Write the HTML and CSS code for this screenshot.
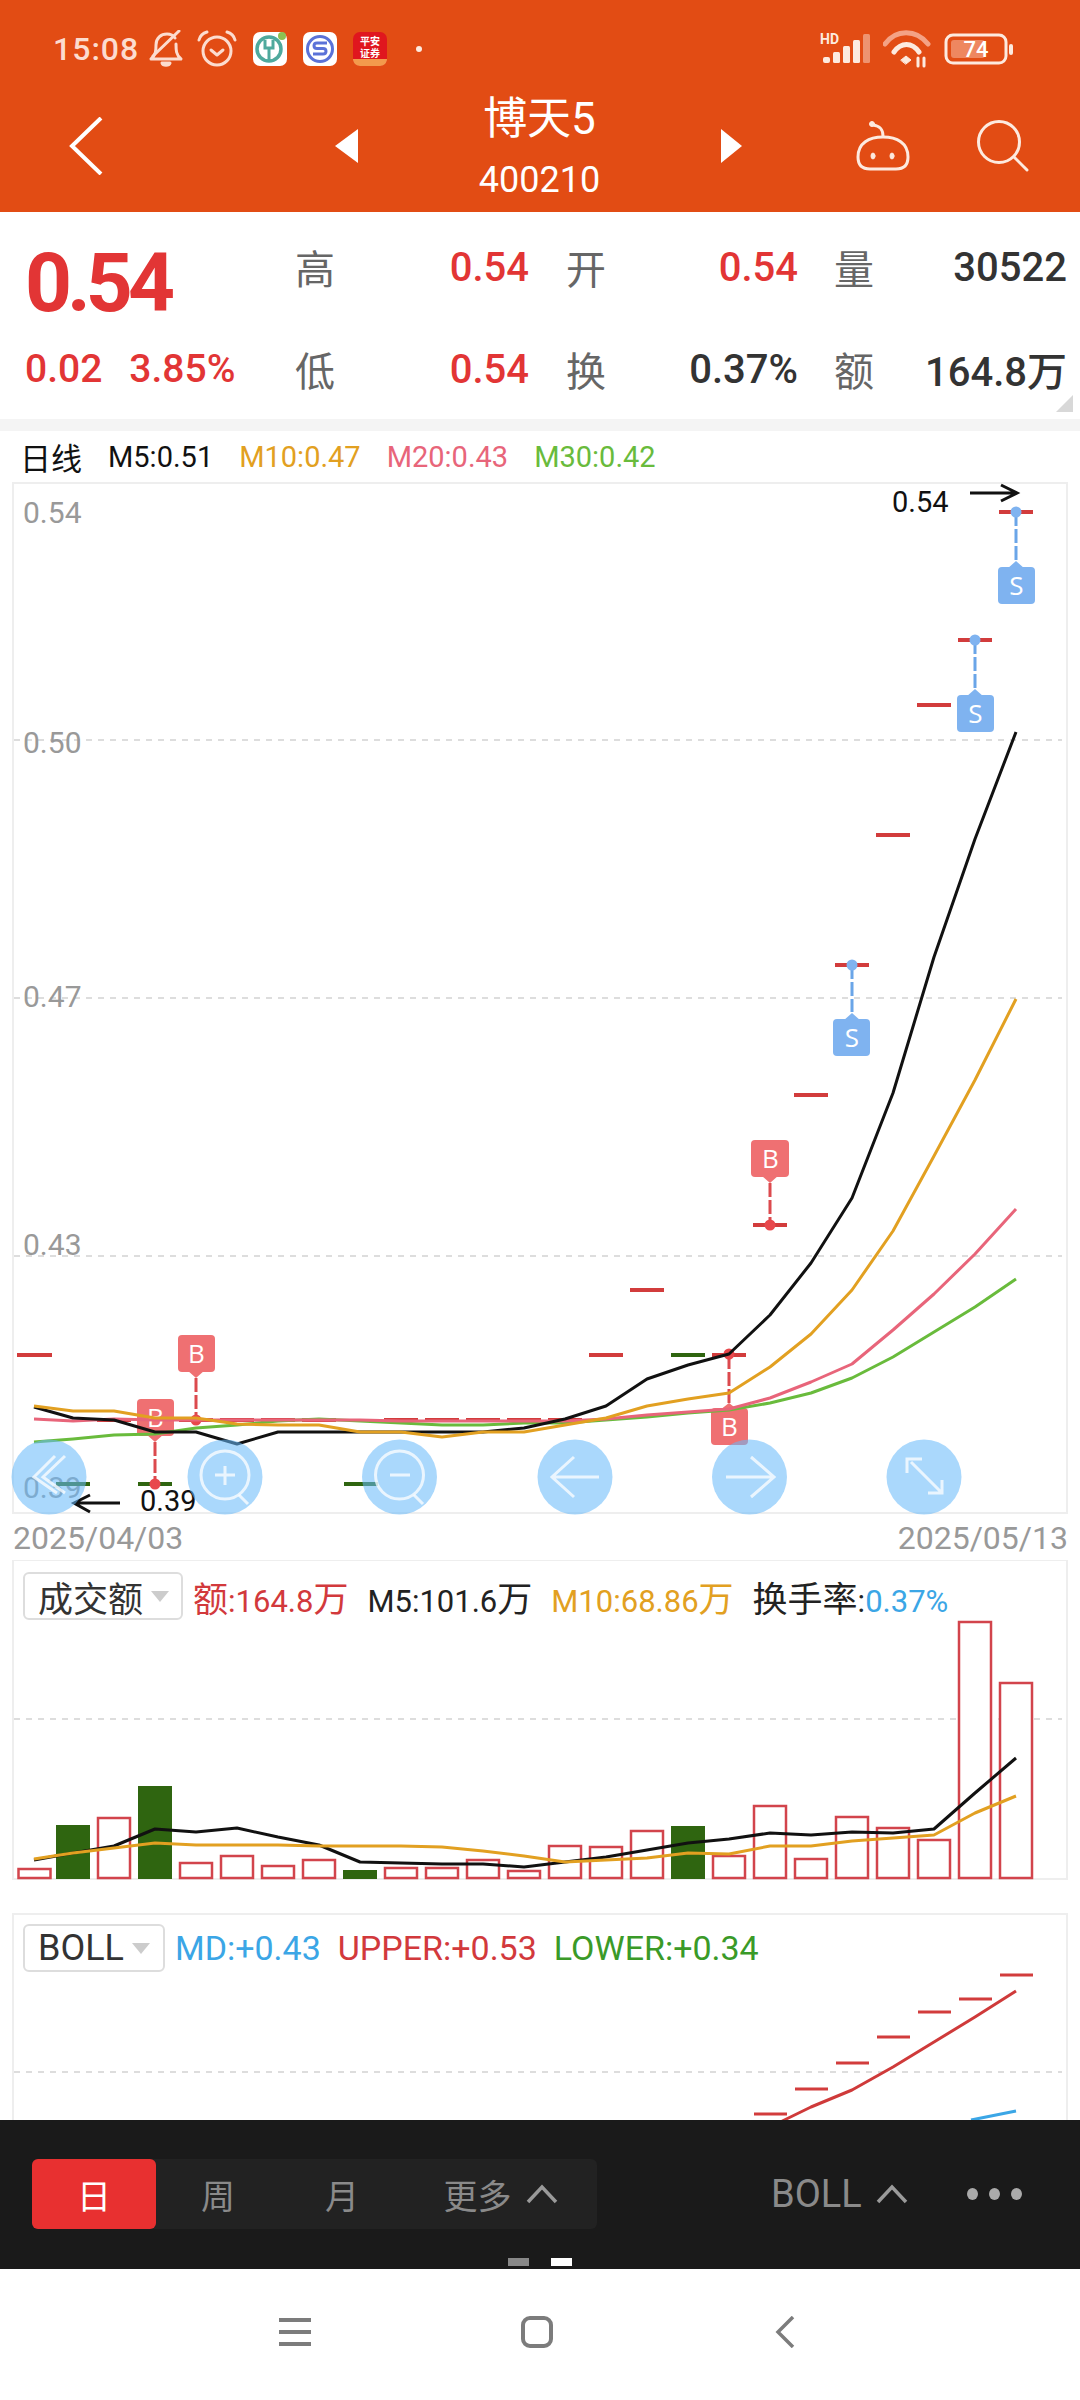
FILE: index.html
```html
<!DOCTYPE html>
<html lang="zh">
<head>
  <meta charset="UTF-8">
  <title>博天5 400210</title>
  <link rel="stylesheet" href="styles.css">
</head>
<body>
<div class="page">

  <!-- orange header: status bar + stock title -->
  <header class="header">
    <div class="status">
      <div class="status-left">
        <span class="time">15:08</span>
        <svg class="ico-bell" width="36" height="38" viewBox="0 0 36 38" fill="none" stroke="#fcdccf" stroke-width="3" stroke-linecap="round" stroke-linejoin="round">
          <path d="M3 29 C8 25 8 20 8 15 C8 8 13 4 19 4 C22 4 25 5 27 8 M28 14 C28 20 28 25 33 29 H3"/>
          <path d="M5 26 L31 1"/>
          <path d="M14 33 H22 C21 36 15 36 14 33Z" fill="#fcdccf"/>
        </svg>
        <svg class="ico-alarm" width="40" height="38" viewBox="0 0 40 38" fill="none" stroke="#fcdccf" stroke-width="3" stroke-linecap="round" stroke-linejoin="round">
          <circle cx="20" cy="21" r="14"/>
          <path d="M2 10 C3 6 6 3 10 2 M38 10 C37 6 34 3 30 2"/>
          <path d="M14 20 L20 25 L26 20"/>
        </svg>
        <svg class="ico-app" width="34" height="34" viewBox="0 0 34 34">
          <rect width="34" height="34" rx="7" fill="#fff"/>
          <circle cx="16" cy="17" r="12" fill="none" stroke="#4fa99d" stroke-width="3.5"/>
          <path d="M12 8 V16 H20 V8 M16 16 V29" fill="none" stroke="#4fa99d" stroke-width="3"/>
          <circle cx="29" cy="4" r="4" fill="#8cc152"/>
        </svg>
        <svg class="ico-app" width="34" height="34" viewBox="0 0 34 34" fill="none">
          <rect width="34" height="34" rx="7" fill="#fff"/>
          <circle cx="17" cy="17" r="12.5" stroke="#5b72d8" stroke-width="3"/>
          <path d="M24 11 H14 C10 11 10 16.500 14 16.500 H20 C24 16.500 24 22 20 22 H10" stroke="#5b72d8" stroke-width="3"/>
        </svg>
        <svg class="ico-app" width="34" height="34" viewBox="0 0 34 34">
          <rect width="34" height="34" rx="7" fill="#e0161e"/>
          <path d="M0 27 H34 C34 31 31 34 27 34 H7 C3 34 0 31 0 27Z" fill="#f39a4c"/>
          <text class="app-txt" x="17" y="13">平安</text>
          <text class="app-txt" x="17" y="25">证券</text>
        </svg>
        <span class="status-dot"></span>
      </div>
      <div class="status-right">
        <svg class="ico-signal" width="50" height="30" viewBox="0 0 50 30" fill="#fdeadf">
          <text class="hd-txt" x="0" y="10">HD</text>
          <rect x="3" y="23" width="7" height="6" rx="2"/>
          <rect x="13" y="18" width="7" height="11" rx="1.500"/>
          <rect x="23" y="12" width="7" height="17" rx="1.500"/>
          <rect x="33" y="6" width="7" height="23" rx="1.500"/>
          <rect x="43" y="0" width="7" height="29" rx="1.500" opacity=".45"/>
        </svg>
        <svg width="48" height="38" viewBox="0 0 48 38" fill="none" stroke-linecap="round">
          <path d="M2 14 C13 -1 33 -1 45 14" stroke="#f4a285" stroke-width="5"/>
          <path d="M11 22 C18 12 29 12 36 22" stroke="#fdeadf" stroke-width="5"/>
          <path d="M18 30 L23 26 L28 30 L23 34Z" fill="#fdeadf" stroke="#fdeadf" stroke-width="1"/>
          <path d="M35 28 V36 M41 28 V36" stroke="#fdeadf" stroke-width="3"/>
        </svg>
        <svg width="70" height="32" viewBox="0 0 70 32" fill="none">
          <rect x="2" y="2" width="60" height="28" rx="7" stroke="#fdeadf" stroke-width="3"/>
          <rect x="7" y="7" width="34" height="18" rx="3" fill="#ee8760"/>
          <rect x="65" y="11" width="4" height="11" rx="2" fill="#fdeadf"/>
          <text class="batt-txt" x="32" y="24">74</text>
        </svg>
      </div>
    </div>

    <div class="nav">
      <svg class="nav-back" width="34" height="58" viewBox="0 0 34 58" fill="none" stroke="#fff" stroke-width="4">
        <path d="M32 1 L3 29 L32 57"/>
      </svg>
      <svg class="nav-prev" width="23" height="34" viewBox="0 0 23 34" fill="#fff"><path d="M23 0 V34 L0 17Z"/></svg>
      <div class="nav-title">
        <div class="stock-name">博天5</div>
        <div class="stock-code">400210</div>
      </div>
      <svg class="nav-next" width="21" height="34" viewBox="0 0 21 34" fill="#fff"><path d="M0 0 V34 L21 17Z"/></svg>
      <svg class="nav-robot" width="56" height="50" viewBox="0 0 56 50" fill="none" stroke="#fdeadf" stroke-width="3" stroke-linecap="round">
        <path d="M3 36 C3 22 14 16 28 16 C42 16 53 22 53 36 C53 45 48 48 41 48 H15 C8 48 3 45 3 36Z"/>
        <path d="M28 15 C28 8 25 5 18 4"/>
        <circle cx="17" cy="3" r="2.500" fill="#fdeadf" stroke-width="1"/>
        <ellipse cx="18" cy="35" rx="2" ry="3" fill="#fdeadf" stroke-width="1"/>
        <ellipse cx="37" cy="35" rx="2" ry="3" fill="#fdeadf" stroke-width="1"/>
      </svg>
      <svg class="nav-search" width="52" height="52" viewBox="0 0 52 52" fill="none" stroke="#fdeadf" stroke-width="3" stroke-linecap="round">
        <circle cx="22" cy="22" r="20.500"/>
        <path d="M37 37 L50 50"/>
      </svg>
    </div>
  </header>

  <!-- quote table -->
  <section class="quote">
    <div class="price up">0.54</div>
    <div class="label">高</div><div class="val up">0.54</div>
    <div class="label">开</div><div class="val up">0.54</div>
    <div class="label">量</div><div class="val">30522</div>

    <div class="change up"><span>0.02</span><span>3.85%</span></div>
    <div class="label">低</div><div class="val up">0.54</div>
    <div class="label">换</div><div class="val">0.37%</div>
    <div class="label">额</div><div class="val">164.8万</div>
    <span class="corner"></span>
  </section>
  <div class="band"></div>

  <div class="ma-row">
    <span class="cjk">日线</span>
    <span>M5:0.51</span>
    <span class="c-yellow">M10:0.47</span>
    <span class="c-pink">M20:0.43</span>
    <span class="c-green">M30:0.42</span>
  </div>

  <!-- candle chart, viewBox uses screen coordinates -->
  <div class="kline">
    <svg class="chart" width="1052" height="1028" viewBox="14 484 1052 1028">
      <g class="grid">
        <line x1="14" y1="740" x2="1062" y2="740"/>
        <line x1="14" y1="998" x2="1062" y2="998"/>
        <line x1="14" y1="1256" x2="1062" y2="1256"/>
      </g>
      <g class="axis">
        <text x="23" y="523">0.54</text>
        <text x="23" y="753">0.50</text>
        <text x="23" y="1007">0.47</text>
        <text x="23" y="1255">0.43</text>
        <text x="23" y="1498">0.39</text>
      </g>

      <g class="dash-up">
        <line x1="17" y1="1355" x2="52" y2="1355"/>
        <line x1="97" y1="1420" x2="131" y2="1420"/>
        <line x1="179" y1="1420" x2="213" y2="1420"/>
        <line x1="220" y1="1420" x2="254" y2="1420"/>
        <line x1="261" y1="1420" x2="295" y2="1420"/>
        <line x1="302" y1="1420" x2="336" y2="1420"/>
        <line x1="384" y1="1420" x2="418" y2="1420"/>
        <line x1="425" y1="1420" x2="459" y2="1420"/>
        <line x1="466" y1="1420" x2="500" y2="1420"/>
        <line x1="507" y1="1420" x2="541" y2="1420"/>
        <line x1="548" y1="1420" x2="582" y2="1420"/>
        <line x1="589" y1="1355" x2="623" y2="1355"/>
        <line x1="630" y1="1290" x2="664" y2="1290"/>
        <line x1="712" y1="1355" x2="746" y2="1355"/>
        <line x1="753" y1="1225" x2="787" y2="1225"/>
        <line x1="794" y1="1095" x2="828" y2="1095"/>
        <line x1="835" y1="965" x2="869" y2="965"/>
        <line x1="876" y1="835" x2="910" y2="835"/>
        <line x1="917" y1="705" x2="951" y2="705"/>
        <line x1="958" y1="640" x2="992" y2="640"/>
        <line x1="999" y1="512" x2="1033" y2="512"/>
      </g>
      <g class="dash-down">
        <line x1="56" y1="1484" x2="90" y2="1484"/>
        <line x1="138" y1="1484" x2="172" y2="1484"/>
        <line x1="344" y1="1484" x2="378" y2="1484"/>
        <line x1="671" y1="1355" x2="705" y2="1355"/>
      </g>

      <g class="mark-buy">
        <line class="pin" x1="155" y1="1442" x2="155" y2="1484"/>
        <circle cx="155" cy="1484" r="5.500"/>
        <path d="M146 1434 H164 L155 1442Z"/>
        <rect x="137" y="1399" width="37" height="37" rx="4"/>
        <text x="155.500" y="1427">B</text>

        <line class="pin" x1="196" y1="1378" x2="196" y2="1420"/>
        <circle cx="196" cy="1420" r="5.500"/>
        <path d="M187 1370 H205 L196 1378Z"/>
        <rect x="178" y="1335" width="37" height="37" rx="4"/>
        <text x="196.500" y="1363">B</text>

        <line class="pin" x1="729" y1="1355" x2="729" y2="1403"/>
        <circle cx="729" cy="1354" r="5.500"/>
        <path d="M720 1410 H738 L729 1403Z"/>
        <rect x="711" y="1408" width="37" height="37" rx="4"/>
        <text x="729.500" y="1436">B</text>

        <line class="pin" x1="770" y1="1183" x2="770" y2="1225"/>
        <circle cx="770" cy="1225" r="5.500"/>
        <path d="M761 1175 H779 L770 1183Z"/>
        <rect x="751" y="1140" width="38" height="37" rx="4"/>
        <text x="770.500" y="1168">B</text>
      </g>
      <g class="mark-sell">
        <line class="pin" x1="852" y1="965" x2="852" y2="1012"/>
        <circle cx="852" cy="965" r="5.500"/>
        <path d="M843 1021 H861 L852 1013Z"/>
        <rect x="833" y="1019" width="37" height="37" rx="4"/>
        <text x="852" y="1047">S</text>

        <line class="pin" x1="975" y1="640" x2="975" y2="689"/>
        <circle cx="975" cy="640" r="5.500"/>
        <path d="M966 697 H984 L975 689Z"/>
        <rect x="957" y="695" width="37" height="37" rx="4"/>
        <text x="975.500" y="723">S</text>

        <line class="pin" x1="1016" y1="512" x2="1016" y2="561"/>
        <circle cx="1016" cy="512" r="5.500"/>
        <path d="M1007 569 H1025 L1016 561Z"/>
        <rect x="998" y="567" width="37" height="37" rx="4"/>
        <text x="1016.500" y="595">S</text>
      </g>

      <g class="lines">
        <polyline stroke="#69bb3c" points="34,1442 73,1439 114,1435 155,1434 196,1428 237,1425 278,1421 319,1419 360,1421 401,1423 442,1425 483,1425 524,1423 565,1423 606,1420 647,1417 688,1413 729,1410 770,1403 811,1393 852,1378 893,1357 934,1332 975,1307 1016,1279"/>
        <polyline stroke="#e8657a" points="34,1419 73,1421 114,1419 155,1420 196,1420 237,1420 278,1420 319,1420 360,1420 401,1421 442,1421 483,1421 524,1421 565,1421 606,1419 647,1415 688,1412 729,1409 770,1398 811,1382 852,1364 893,1330 934,1294 975,1254 1016,1209"/>
        <polyline stroke="#111" points="34,1407 73,1418 114,1420 155,1432 196,1432 237,1444 278,1432 319,1432 360,1432 401,1432 442,1432 483,1432 524,1428 565,1419 606,1406 647,1379 688,1365 729,1354 770,1315 811,1263 852,1198 893,1093 934,957 975,839 1016,732"/>
        <polyline stroke="#e2a021" points="34,1406 73,1411 114,1411 155,1418 196,1418 237,1424 278,1425 319,1425 360,1432 401,1432 442,1437 483,1432 524,1432 565,1425 606,1418 647,1406 688,1399 729,1393 770,1367 811,1334 852,1290 893,1231 934,1156 975,1080 1016,999"/>
      </g>

      <g class="extreme">
        <text x="892" y="512">0.54</text>
        <path d="M970 493 H1016 M1001 485 L1017 493 L1001 501"/>
        <text x="140" y="1511">0.39</text>
        <path d="M120 1503 H75 M90 1495 L74 1503 L90 1512"/>
      </g>

      <!-- round floating buttons -->
      <g class="fab">
        <circle cx="49" cy="1477" r="37.500"/>
        <circle cx="225" cy="1477" r="37.500"/>
        <circle cx="399.500" cy="1477" r="37.500"/>
        <circle cx="575" cy="1477" r="37.500"/>
        <circle cx="749.500" cy="1477" r="37.500"/>
        <circle cx="924" cy="1477" r="37.500"/>
      </g>
      <g class="fab-ico">
        <path d="M55 1456 L34 1477 L57 1493 M65 1456 L43 1477 L65 1493"/>
        <circle cx="225" cy="1475" r="24"/>
        <path d="M239 1495 L248 1504 M225 1466 V1485 M215 1475 H235"/>
        <circle cx="399.500" cy="1475" r="24"/>
        <path d="M414 1495 L423 1504 M390 1475 H410"/>
        <path d="M599 1477 H553 M574 1457 L552 1477 L574 1497"/>
        <path d="M726 1477 H773 M751 1457 L774 1477 L751 1497"/>
        <path d="M911 1462 L941 1492 M907 1473 V1459 H922 M928 1493 H942 V1480"/>
      </g>
    </svg>
  </div>

  <div class="dates">
    <span>2025/04/03</span>
    <span>2025/05/13</span>
  </div>

  <!-- turnover panel -->
  <section class="panel panel-vol">
    <div class="panel-head">
      <div class="picker"><span>成交额</span><i class="picker-arrow"></i></div>
      <div class="legend">
        <span class="c-red"><span class="cjk">额</span>:164.8<span class="cjk">万</span></span>
        <span>M5:101.6<span class="cjk">万</span></span>
        <span class="c-yellow">M10:68.86<span class="cjk">万</span></span>
        <span><span class="cjk">换手率</span>:<span class="c-blue">0.37%</span></span>
      </div>
    </div>
    <svg class="chart" width="1052" height="257" viewBox="14 1622 1052 257">
      <g class="grid"><line x1="14" y1="1719" x2="1062" y2="1719"/></g>
      <g class="bar-up">
        <rect x="18.500" y="1869" width="32" height="9"/>
        <rect x="98" y="1818" width="32" height="60"/>
        <rect x="180" y="1863" width="32" height="15"/>
        <rect x="221" y="1856" width="32" height="22"/>
        <rect x="262" y="1866" width="32" height="12"/>
        <rect x="303" y="1860" width="32" height="18"/>
        <rect x="385" y="1868" width="32" height="10"/>
        <rect x="426" y="1868" width="32" height="10"/>
        <rect x="467" y="1860" width="32" height="18"/>
        <rect x="508" y="1871" width="32" height="7"/>
        <rect x="549" y="1846" width="32" height="32"/>
        <rect x="590" y="1847" width="32" height="31"/>
        <rect x="631" y="1831" width="32" height="47"/>
        <rect x="713" y="1856" width="32" height="22"/>
        <rect x="754" y="1806" width="32" height="72"/>
        <rect x="795" y="1859" width="32" height="19"/>
        <rect x="836" y="1817" width="32" height="61"/>
        <rect x="877" y="1828" width="32" height="50"/>
        <rect x="918" y="1840" width="32" height="38"/>
        <rect x="959" y="1622" width="32" height="256"/>
        <rect x="1000" y="1683" width="32" height="195"/>
      </g>
      <g class="bar-down">
        <rect x="56" y="1825" width="34" height="54"/>
        <rect x="138" y="1786" width="34" height="93"/>
        <rect x="343" y="1870" width="34" height="9"/>
        <rect x="671" y="1826" width="34" height="53"/>
      </g>
      <g class="lines">
        <polyline stroke="#111" points="34,1860 73,1853 114,1846 155,1829 196,1832 237,1828 278,1837 319,1845 360,1862 401,1863 442,1864 483,1864 524,1867 565,1862 606,1857 647,1850 688,1843 729,1839 770,1833 811,1835 852,1832 893,1833 934,1829 975,1793 1016,1758"/>
        <polyline stroke="#e2a021" points="34,1859 73,1853 114,1848 155,1843 196,1845 237,1845 278,1845 319,1846 360,1846 401,1846 442,1847 483,1851 524,1856 565,1862 606,1860 647,1858 688,1853 729,1854 770,1846 811,1846 852,1841 893,1838 934,1835 975,1813 1016,1796"/>
      </g>
    </svg>
  </section>

  <!-- bollinger panel, cut off by the bar below -->
  <section class="panel panel-boll">
    <div class="panel-head">
      <div class="picker picker-boll"><span>BOLL</span><i class="picker-arrow"></i></div>
      <div class="legend">
        <span class="c-blue">MD:+0.43</span>
        <span class="c-red">UPPER:+0.53</span>
        <span class="c-dkgreen">LOWER:+0.34</span>
      </div>
    </div>
    <svg class="chart" width="1052" height="148" viewBox="14 1972 1052 148">
      <g class="grid"><line x1="14" y1="2072" x2="1062" y2="2072"/></g>
      <g class="dash-up thin">
        <line x1="754" y1="2114" x2="787" y2="2114"/>
        <line x1="795" y1="2089" x2="828" y2="2089"/>
        <line x1="836" y1="2063" x2="869" y2="2063"/>
        <line x1="877" y1="2037" x2="910" y2="2037"/>
        <line x1="918" y1="2012" x2="951" y2="2012"/>
        <line x1="959" y1="1999" x2="992" y2="1999"/>
        <line x1="1000" y1="1975" x2="1033" y2="1975"/>
      </g>
      <g class="lines">
        <polyline stroke="#cf3a3a" points="770,2127 811,2107 852,2090 893,2067 934,2042 975,2017 1016,1991"/>
        <polyline stroke="#3ba6e6" points="971,2120 1016,2111"/>
      </g>
    </svg>
  </section>

  <!-- period tabs -->
  <div class="tabbar">
    <div class="tabs">
      <span class="tab active">日</span>
      <span class="tab">周</span>
      <span class="tab">月</span>
      <span class="tab tab-more">更多<svg class="caret" width="32" height="20" viewBox="0 0 32 20"><path d="M2 18 L16 3 L30 18"/></svg></span>
    </div>
    <div class="tab-boll">BOLL<svg class="caret" width="32" height="20" viewBox="0 0 32 20"><path d="M2 18 L16 3 L30 18"/></svg></div>
    <div class="more-dots"><i></i><i></i><i></i></div>
    <div class="pager"><i></i><i class="on"></i></div>
  </div>

  <!-- android nav bar -->
  <footer class="sysnav">
    <svg width="32" height="28" viewBox="0 0 32 28" stroke="#7c7c7c" stroke-width="4"><path d="M0 2 H32 M0 14 H32 M0 26 H32"/></svg>
    <svg class="nav-home" width="32" height="32" viewBox="0 0 32 32" fill="none" stroke="#7c7c7c" stroke-width="4"><rect x="2" y="2" width="28" height="28" rx="7"/></svg>
    <svg class="nav-tri" width="20" height="32" viewBox="0 0 20 32" fill="none" stroke="#7c7c7c" stroke-width="3.500"><path d="M18 1 L3 16 L18 31"/></svg>
  </footer>
</div>
</body>
</html>
```

FILE: styles.css
```css
* {
  box-sizing: border-box;
}

body {
  margin: 0;
  background: #fff;
  font-family: Roboto, "Noto Sans CJK SC", sans-serif;
  color: #333;
}

.page {
  width: 1080px;
  height: 2400px;
  overflow: hidden;
}

/* header */
.header {
  height: 212px;
  background: #e24c14;
  color: #fff;
}

.status {
  height: 80px;
  padding: 18px 66px 0 53px;
  display: flex;
  justify-content: space-between;
}

.status-left,
.status-right {
  height: 62px;
  display: flex;
  align-items: center;
}

.time {
  font-size: 32px;
  font-weight: 500;
  letter-spacing: 1px;
  color: #fcdccf;
}

.ico-bell {
  margin-left: 9px;
}

.ico-alarm {
  margin-left: 13px;
}

.ico-app {
  margin-left: 16px;
}

.status-dot {
  width: 6px;
  height: 6px;
  margin-left: 29px;
  border-radius: 50%;
  background: #fdeadf;
}

.status-right {
  gap: 13px;
}

.ico-signal {
  overflow: visible;
}

.app-txt {
  font-size: 10px;
  font-weight: 700;
  fill: #fff;
  text-anchor: middle;
}

.hd-txt {
  font-size: 14px;
  font-weight: 700;
}

.batt-txt {
  font-size: 22px;
  font-weight: 500;
  fill: #fff;
  text-anchor: middle;
}

.nav {
  height: 132px;
  padding-left: 69px;
  display: flex;
  align-items: center;
}

.nav-prev {
  margin-left: 232px;
}

.nav-title {
  width: 363px;
  padding-top: 3px;
  text-align: center;
}

.stock-name {
  font-size: 44px;
  line-height: 60px;
}

.stock-code {
  margin-top: 5px;
  font-size: 36px;
  line-height: 52px;
}

.nav-robot {
  margin-left: 113px;
}

.nav-search {
  margin-left: 66px;
}

/* quote */
.quote {
  position: relative;
  height: 207px;
  padding: 4px 13px 0 25px;
  display: grid;
  grid-template-columns: 233px 77px 194px 77px 192px 76px 193px;
  grid-auto-rows: 102px;
  align-items: center;
  font-size: 40px;
}

.label {
  text-align: right;
  font-size: 40px;
  color: #666;
}

.val {
  text-align: right;
  font-weight: 500;
}

.up {
  color: #e23535;
}

.price {
  margin-top: 32px;
  font-size: 82px;
  font-weight: 700;
  line-height: 90px;
  letter-spacing: -5px;
}

.change {
  display: flex;
  gap: 27px;
  font-weight: 500;
  font-size: 39px;
}

.corner {
  position: absolute;
  right: 7px;
  bottom: 7px;
  width: 17px;
  height: 17px;
  background: #d8d8d8;
  clip-path: polygon(100% 0, 100% 100%, 0 100%);
}

.band {
  height: 12px;
  background: #f4f4f4;
}

.ma-row {
  height: 51px;
  padding-left: 20px;
  display: flex;
  align-items: center;
  gap: 26px;
  font-size: 29px;
  color: #111;
}

.ma-row .cjk {
  font-size: 31px;
}

.cjk {
  font-size: 35px;
}

.c-yellow {
  color: #e2a021;
}

.c-pink {
  color: #e8657a;
}

.c-green {
  color: #69bb3c;
}

.c-red {
  color: #d2393c;
}

.c-blue {
  color: #3ba6e6;
}

.c-dkgreen {
  color: #3a9a28;
}

/* charts */
.kline {
  width: 1056px;
  height: 1032px;
  margin-left: 12px;
  border: 2px solid #eee;
}

.chart {
  display: block;
  overflow: visible;
}

.grid line {
  stroke: #ddd;
  stroke-width: 2;
  stroke-dasharray: 6 6;
}

.axis text {
  font-size: 30px;
  fill: #999;
}

.dash-up line {
  stroke: #d23c3c;
  stroke-width: 4;
}

.dash-up.thin line {
  stroke-width: 3;
}

.dash-down line {
  stroke: #2f6510;
  stroke-width: 4;
}

.lines polyline {
  fill: none;
  stroke-width: 3;
  stroke-linejoin: round;
}

.mark-buy rect,
.mark-buy path,
.mark-buy circle {
  fill: #ef7072;
}

.mark-sell rect,
.mark-sell path,
.mark-sell circle {
  fill: #7fb3f0;
}

.mark-buy circle {
  fill: #e8484c;
}

.pin {
  stroke-width: 3;
  stroke-dasharray: 14 3;
}

.mark-buy .pin {
  stroke: #dc4a4e;
}

.mark-sell .pin {
  stroke: #6aa5e8;
}

.mark-buy text,
.mark-sell text {
  font-family: "Open Sans", sans-serif;
  font-size: 26px;
  fill: #fff;
  text-anchor: middle;
}

.extreme text {
  font-size: 29px;
  fill: #111;
}

.extreme path {
  fill: none;
  stroke: #111;
  stroke-width: 3;
}

.fab circle {
  fill: #67b9fa;
  fill-opacity: .56;
}

.fab-ico circle,
.fab-ico path {
  fill: none;
  stroke: #fff;
  stroke-opacity: .75;
  stroke-width: 3;
}

.dates {
  height: 46px;
  padding: 2px 12px 0 13px;
  display: flex;
  justify-content: space-between;
  align-items: center;
  font-size: 32px;
  color: #999;
}

.panel {
  width: 1056px;
  margin-left: 12px;
  border: 2px solid #eee;
}

.panel-vol {
  height: 320px;
  margin-bottom: 33px;
  border-top-width: 1px;
}

.panel-boll {
  height: 207px;
  border-bottom: 0;
}

.panel-head {
  height: 61px;
  padding: 11px 0 0 9px;
  display: flex;
  align-items: flex-start;
}

.panel-boll .panel-head {
  height: 57px;
  padding-top: 9px;
}

.picker {
  height: 48px;
  padding: 0 12px 0 13px;
  display: flex;
  align-items: center;
  gap: 8px;
  border: 2px solid #ddd;
  border-radius: 6px;
  font-size: 35px;
  color: #333;
}

.picker-boll {
  font-size: 36px;
  padding-right: 13px;
}

.picker-arrow {
  width: 0;
  height: 0;
  border-left: 9px solid transparent;
  border-right: 9px solid transparent;
  border-top: 11px solid #ccc;
}

.legend {
  height: 48px;
  margin-left: 10px;
  display: flex;
  align-items: center;
  gap: 19px;
  font-size: 31px;
  color: #222;
  white-space: nowrap;
}

.panel-boll .legend {
  gap: 17px;
  font-size: 34px;
}

.bar-up rect {
  fill: #fff;
  stroke: #d2444c;
  stroke-width: 2.500;
}

.bar-down rect {
  fill: #2f6510;
}

/* bottom dark bar */
.tabbar {
  position: relative;
  height: 149px;
  padding: 39px 0 0 32px;
  background: #1a1a1a;
  display: flex;
  align-items: flex-start;
  color: #8a8a8a;
  font-size: 34px;
}

.tabs {
  width: 565px;
  height: 70px;
  display: flex;
  background: #222;
  border-radius: 6px;
}

.tab {
  width: 124px;
  height: 70px;
  display: flex;
  align-items: center;
  justify-content: center;
}

.tab.active {
  background: #e83030;
  border-radius: 6px;
  color: #fff;
}

.tab-more {
  width: 193px;
  gap: 14px;
}

.caret {
  fill: none;
  stroke: #9a9a9a;
  stroke-width: 3.500;
}

.tab-boll {
  height: 70px;
  margin-left: 174px;
  display: flex;
  align-items: center;
  gap: 14px;
  font-size: 38px;
}

.more-dots {
  height: 70px;
  margin-left: 59px;
  display: flex;
  align-items: center;
  gap: 11px;
}

.more-dots i {
  width: 11px;
  height: 12px;
  border-radius: 50%;
  background: #aaa;
}

.pager {
  position: absolute;
  left: 508px;
  bottom: 3px;
  display: flex;
  gap: 22px;
}

.pager i {
  width: 21px;
  height: 8px;
  background: #888;
}

.pager .on {
  background: #fff;
}

.sysnav {
  height: 131px;
  padding: 0 0 5px 279px;
  display: flex;
  align-items: center;
  background: #fff;
}

.nav-home {
  margin-left: 210px;
}

.nav-tri {
  margin-left: 222px;
}
```
